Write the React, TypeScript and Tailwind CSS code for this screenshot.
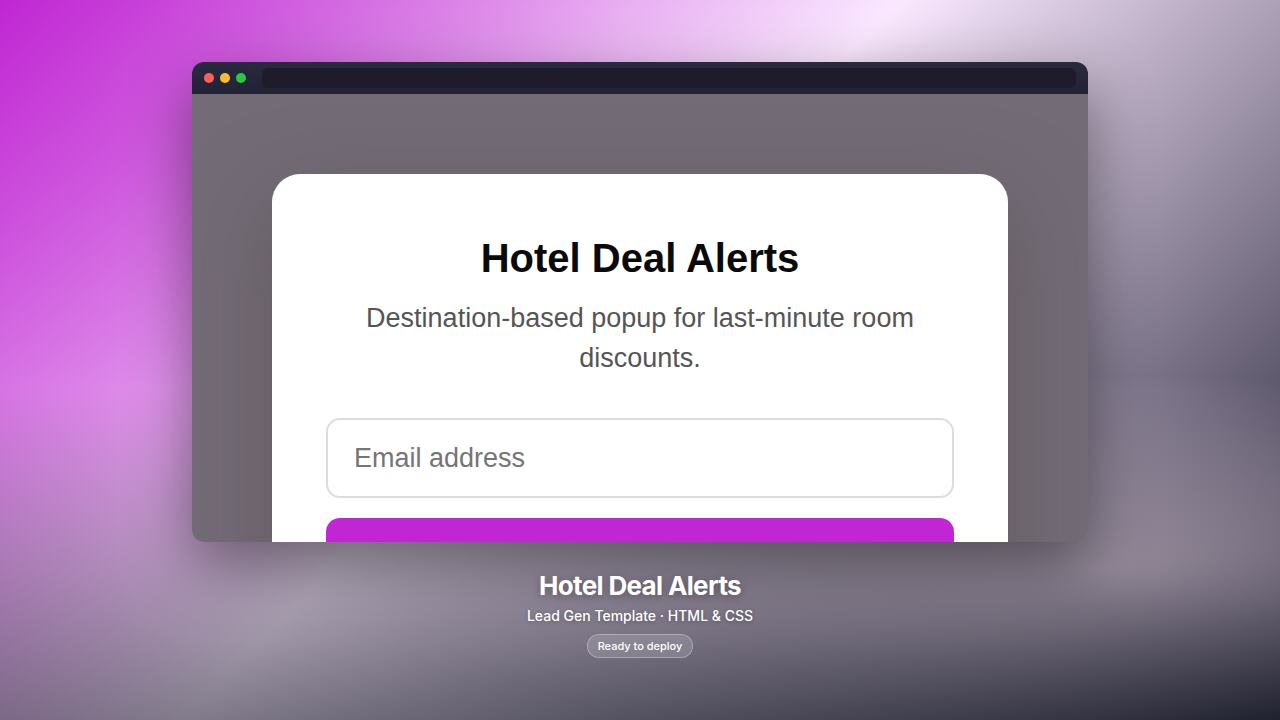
export default function App() {
  return (
    <main className="flex min-h-screen flex-col items-center justify-center overflow-hidden bg-[linear-gradient(180deg,transparent_54%,rgba(10,16,24,0.5)_100%),radial-gradient(56%_27%_at_86%_79%,rgba(255,232,250,0.66),transparent),radial-gradient(40%_60%_at_10%_20%,rgba(192,38,211,0.22),transparent),linear-gradient(135deg,#c026d3_0%,#fae8ff_45%,#1a1a2e_100%)] font-['Inter',sans-serif]">
      <BrowserWindow />
      <Caption />
    </main>
  );
}

function BrowserWindow() {
  return (
    <div className="flex h-120 w-[70%] flex-col overflow-hidden rounded-xl shadow-[0_24px_64px_rgba(0,0,0,0.45)]">
      <div className="flex h-8 shrink-0 items-center gap-4 bg-linear-to-b from-[#2a2a3e] to-[#222236] px-3">
        <div className="flex gap-1.5">
          <span className="size-2.5 rounded-full bg-[#ff5f57]"></span>
          <span className="size-2.5 rounded-full bg-[#febc2e]"></span>
          <span className="size-2.5 rounded-full bg-[#28c840]"></span>
        </div>
        <div className="h-5 flex-1 rounded-md bg-[#1e1c2a]"></div>
      </div>
      <div className="flex-1 overflow-hidden bg-[#736b76] px-20 pt-20 font-['Liberation_Sans',sans-serif]">
        <SignupCard />
      </div>
    </div>
  );
}

function SignupCard() {
  return (
    <section className="rounded-[28px] bg-white px-[54px] py-14 text-center shadow-[0_24px_80px_rgba(90,80,80,0.6)]">
      <h1 className="mb-3 text-[40px] leading-14 font-bold text-[#0a0a0a]">
        Hotel Deal Alerts
      </h1>
      <p className="mb-10 text-[27px] leading-10 text-[#555555]">
        Destination-based popup for last-minute room discounts.
      </p>
      <form>
        <input
          type="email"
          aria-label="Email address"
          placeholder="Email address"
          className="mb-5 h-20 w-full rounded-[14px] border-2 border-[#dddddd] px-[26px] text-[27px] placeholder:text-[#757575] focus:outline-none"
        />
        <button
          type="button"
          aria-label="Sign up"
          className="h-20 w-full rounded-[14px] bg-[#c026d3]"
        ></button>
      </form>
    </section>
  );
}

function Caption() {
  return (
    <div className="mt-7 flex flex-col items-center text-white">
      <h2 className="text-[26px] leading-8 font-bold tracking-tight [text-shadow:0_2px_8px_rgba(0,0,0,0.3)]">
        Hotel Deal Alerts
      </h2>
      <p className="mt-1 text-sm leading-5 font-medium [text-shadow:0_1px_4px_rgba(0,0,0,0.3)]">
        Lead Gen Template · HTML &amp; CSS
      </p>
      <span className="mt-2 rounded-full border border-white/30 bg-white/15 px-2.5 text-[11px] leading-[22px] font-medium">
        Ready to deploy
      </span>
    </div>
  );
}
